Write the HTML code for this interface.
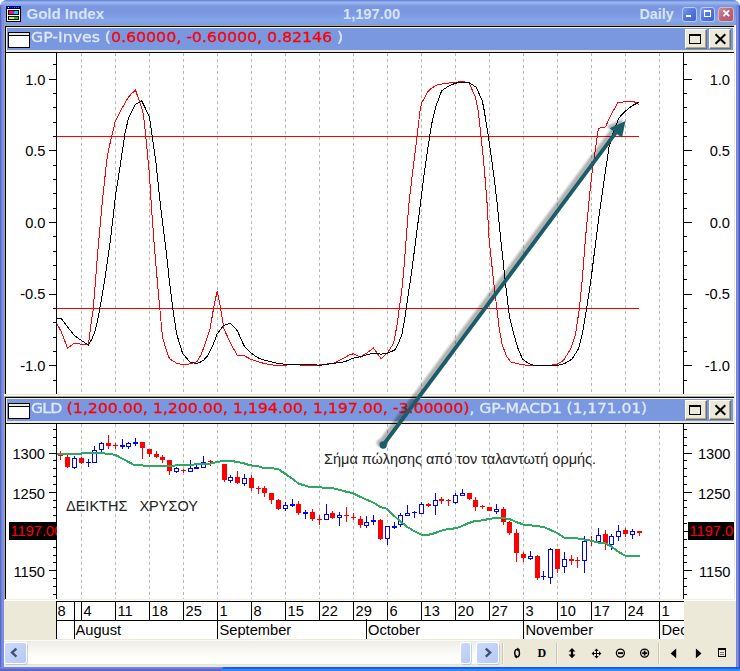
<!DOCTYPE html>
<html><head><meta charset="utf-8"><title>Gold Index</title>
<style>
html,body{margin:0;padding:0;background:#fff;}
body{width:740px;height:671px;overflow:hidden;position:relative;font-family:"Liberation Sans",sans-serif;}
#win{position:absolute;left:0;top:0;width:740px;height:671px;background:#7a96df;border-radius:7px 7px 0 0;overflow:hidden;}
#tb{position:absolute;left:0;top:0;width:740px;height:25px;background:linear-gradient(to bottom,#5f80da 0px,#6f90e0 0.9px,#96b1eb 1.8px,#9cb6ed 3px,#88a5e6 4.5px,#7a96df 6.5px,#7a97e0 12px,#83a5ea 20px,#81a2e7 23px,#7b9adf 25px);}
#lb{position:absolute;left:0;top:5px;width:4px;height:666px;background:linear-gradient(to right,#5a68ca 0px,#5a68ca 1px,#7282da 1px,#7282da 2px,#7a90de 2px,#7a90de 3px,#7892e0 3px);}
#rb{position:absolute;left:736px;top:5px;width:4px;height:662px;background:linear-gradient(to right,#6c84dc 0px,#6c84dc 1px,#7a90e0 1px,#7a90e0 2px,#6c76ce 2px,#6c76ce 3px,#4c52ba 3px);}
#bb{position:absolute;left:0;top:667px;width:740px;height:4px;background:linear-gradient(to bottom,#7b90e0 0px,#6e80d8 1.3px,#5c68c8 2.6px,#5560c2 4px);}
#bb2{position:absolute;left:221px;top:667px;width:519px;height:4px;border-top-left-radius:4px;background:linear-gradient(to bottom,#2a58d8 0px,#0a50de 0.9px,#1c6cee 1.6px,#2a88fc 2.3px,#2b8cff 4px);}
.abs{position:absolute;}
.ttl{position:absolute;top:5px;height:18px;line-height:18px;font-weight:bold;font-size:14.67px;color:#d8e4f8;white-space:nowrap;}
#client{position:absolute;left:4px;top:25px;width:732px;height:642px;background:#ece9d8;}
.cb{position:absolute;top:6.5px;width:15.2px;height:15.2px;border:1px solid #b9c9f2;border-radius:3px;box-sizing:border-box;}
.hdr{position:absolute;left:7px;width:726px;height:22px;background:#7a98e0;}
.hbtn{position:absolute;width:22px;height:20px;box-sizing:border-box;background:#ece9d8;border-top:1px solid #fff;border-left:1px solid #fff;border-right:1px solid #716f64;border-bottom:1px solid #716f64;}
.hbtn:after{content:"";position:absolute;left:0;top:0;right:0;bottom:0;border-right:1px solid #aca899;border-bottom:1px solid #aca899;}
.htxt{position:absolute;white-space:nowrap;font-family:"DejaVu Sans","Liberation Sans",sans-serif;transform-origin:0 0;line-height:18px;height:18px;color:#dfe8fb;-webkit-text-stroke:0.3px currentColor;}
.htxt b{font-weight:normal;color:#ff0000;}
.ico{position:absolute;left:8px;width:22px;height:16px;box-sizing:border-box;border:1px solid #000;background:#fff;}
.ico:before{content:"";position:absolute;left:0;top:0;width:20px;height:2px;background:#ece9d8;border-bottom:1px solid #000;}
svg text{font-family:"Liberation Sans",sans-serif;}
.sbtn{position:absolute;top:642px;width:23px;height:22px;background:#fff;border-radius:3px;box-shadow:1px 1px 0 rgba(140,165,220,.5);}
.sbtn i{position:absolute;left:1px;top:1px;right:1px;bottom:1px;border-radius:2px;background:linear-gradient(135deg,#ccd9fa,#b7caf4);}
</style></head><body>
<div id="win">
<div id="tb"></div><div id="lb"></div><div id="rb"></div><div id="bb"></div><div id="bb2"></div>

<svg class="abs" style="left:6px;top:6px" width="15" height="16" viewBox="0 0 15 16" shape-rendering="crispEdges">
<rect x="0" y="0" width="15" height="16" fill="#000"/>
<rect x="0" y="0" width="15" height="2" fill="#0000a8"/>
<rect x="2" y="1" width="1" height="1" fill="#fff"/><rect x="4" y="1" width="1" height="1" fill="#2020ff"/><rect x="6" y="1" width="1" height="1" fill="#2020ff"/><rect x="8" y="1" width="1" height="1" fill="#008a8a"/><rect x="10" y="1" width="1" height="1" fill="#008a8a"/><rect x="12" y="1" width="1" height="1" fill="#008a8a"/>
<rect x="1" y="3" width="13" height="12" fill="#fff"/>
<rect x="2" y="4" width="11" height="5" fill="#000"/><rect x="2" y="10" width="11" height="4" fill="#000"/>
<rect x="3" y="5" width="5" height="3" fill="#ff00a0"/><rect x="8" y="5" width="4" height="3" fill="#00d0ff"/>
<rect x="3" y="11" width="5" height="2" fill="#f0f000"/><rect x="8" y="11" width="4" height="2" fill="#00e000"/>
</svg>
<div class="ttl" style="left:26.5px;font-size:15px">Gold Index</div>
<div class="ttl" style="left:343px">1,197.00</div>
<div class="ttl" style="left:639.5px;font-size:14.3px">Daily</div>

<div class="cb" style="left:682.2px;background:linear-gradient(135deg,#7d9bea 0%,#5777de 45%,#3f61d6 100%);"><div class="abs" style="left:2.8px;top:7.7px;width:5.2px;height:2px;background:#fff"></div></div>
<div class="cb" style="left:700.3px;background:linear-gradient(135deg,#7d9bea 0%,#5777de 45%,#3f61d6 100%);"><div class="abs" style="left:2.6px;top:2.6px;width:7.6px;height:6.8px;box-sizing:border-box;border:1px solid #fff;border-top-width:2px"></div></div>
<div class="cb" style="left:718.4px;border-color:#dcb4c2;background:linear-gradient(135deg,#c98a9c 0%,#b7657c 50%,#ae5a72 100%);"><svg class="abs" style="left:2.2px;top:1.9px" width="9" height="9" viewBox="0 0 9 9"><path d="M1.4 1.4 L7.2 7.2 M7.2 1.4 L1.4 7.2" stroke="#fff" stroke-width="1.9" fill="none"/></svg></div>

<div id="client"></div>
<div class="abs" style="left:4px;top:25px;width:730px;height:1px;background:#aca899"></div>
<div class="abs" style="left:4px;top:25px;width:1px;height:370px;background:#aca899"></div>
<div class="abs" style="left:5px;top:26px;width:729px;height:1px;background:#000"></div>
<div class="abs" style="left:5px;top:26px;width:1px;height:368px;background:#000"></div>
<div class="abs" style="left:6px;top:27px;width:728px;height:1px;background:#f6f4ea"></div>
<div class="abs" style="left:6px;top:27px;width:1px;height:25px;background:#f6f4ea"></div>
<div class="abs" style="left:734px;top:25px;width:1px;height:371px;background:#ece9d8"></div>
<div class="abs" style="left:735px;top:25px;width:1px;height:371px;background:#fff"></div>
<div class="abs" style="left:6px;top:53px;width:728px;height:341px;background:#fff"></div>
<div class="abs" style="left:5px;top:52px;width:729px;height:1px;background:#000"></div>
<div class="abs" style="left:4px;top:394px;width:731px;height:1px;background:#ece9d8"></div>
<div class="abs" style="left:4px;top:395px;width:732px;height:1px;background:#fff"></div>
<div class="abs" style="left:4px;top:396px;width:730px;height:1px;background:#aca899"></div>
<div class="abs" style="left:4px;top:396px;width:1px;height:204px;background:#aca899"></div>
<div class="abs" style="left:5px;top:397px;width:729px;height:1px;background:#000"></div>
<div class="abs" style="left:5px;top:397px;width:1px;height:202px;background:#000"></div>
<div class="abs" style="left:6px;top:398px;width:728px;height:1px;background:#f6f4ea"></div>
<div class="abs" style="left:6px;top:398px;width:1px;height:25px;background:#f6f4ea"></div>
<div class="abs" style="left:734px;top:396px;width:1px;height:204px;background:#ece9d8"></div>
<div class="abs" style="left:735px;top:396px;width:1px;height:204px;background:#fff"></div>
<div class="abs" style="left:6px;top:424px;width:728px;height:175px;background:#fff"></div>
<div class="abs" style="left:5px;top:423px;width:729px;height:1px;background:#000"></div>
<div class="abs" style="left:5px;top:599px;width:730px;height:1px;background:#f1efe2"></div>
<div class="abs" style="left:4px;top:600px;width:732px;height:1px;background:#fff"></div>
<div class="hdr" style="top:28px"></div>
<div class="ico" style="top:32px"></div>
<div class="htxt" id="h28" style="left:31px;top:28.4px;font-size:14.6px;transform:scaleX(1.079)">GP-Inves (<b>0.60000, -0.60000, 0.82146 </b>)</div>
<div class="hbtn" style="left:685px;top:29px"><div class="abs" style="left:3px;top:4px;width:12px;height:10px;box-sizing:border-box;border:1px solid #000;border-top-width:2px"></div></div>
<div class="hbtn" style="left:709px;top:29px"><svg class="abs" style="left:3.5px;top:3px" width="13" height="12" viewBox="0 0 13 12"><path d="M1.5 1.2 L11.3 10.8 M11.3 1.2 L1.5 10.8" stroke="#000" stroke-width="2" fill="none"/></svg></div>
<div class="hdr" style="top:399px"></div>
<div class="ico" style="top:403px"></div>
<div class="htxt" id="h399" style="left:31px;top:399.4px;font-size:14.6px;transform:scaleX(1.072)"><span style="letter-spacing:-0.7px">GLD</span> <b style="letter-spacing:0.035px">(1,200.00, 1,200.00, 1,194.00, 1,197.00, -3.00000)</b><span style="letter-spacing:-0.13px">, GP-MACD1 (1,171.01)</span></div>
<div class="hbtn" style="left:685px;top:400px"><div class="abs" style="left:3px;top:4px;width:12px;height:10px;box-sizing:border-box;border:1px solid #000;border-top-width:2px"></div></div>
<div class="hbtn" style="left:709px;top:400px"><svg class="abs" style="left:3.5px;top:3px" width="13" height="12" viewBox="0 0 13 12"><path d="M1.5 1.2 L11.3 10.8 M11.3 1.2 L1.5 10.8" stroke="#000" stroke-width="2" fill="none"/></svg></div>
<svg class="abs" style="left:0;top:0" width="740" height="671" viewBox="0 0 740 671">
<defs><filter id="sh" x="-10%" y="-10%" width="120%" height="120%"><feGaussianBlur stdDeviation="1.1"/></filter>
<clipPath id="c1"><rect x="57" y="53" width="626" height="341"/></clipPath><clipPath id="c2"><rect x="57" y="424" width="626" height="175"/></clipPath></defs>
<g shape-rendering="crispEdges">
<line x1="81.5" y1="53" x2="81.5" y2="394" stroke="#b8b8b8" stroke-width="1" stroke-dasharray="3,3"/>
<line x1="81.5" y1="424" x2="81.5" y2="599" stroke="#b8b8b8" stroke-width="1" stroke-dasharray="3,3"/>
<line x1="115.5" y1="53" x2="115.5" y2="394" stroke="#b8b8b8" stroke-width="1" stroke-dasharray="3,3"/>
<line x1="115.5" y1="424" x2="115.5" y2="599" stroke="#b8b8b8" stroke-width="1" stroke-dasharray="3,3"/>
<line x1="149.5" y1="53" x2="149.5" y2="394" stroke="#b8b8b8" stroke-width="1" stroke-dasharray="3,3"/>
<line x1="149.5" y1="424" x2="149.5" y2="599" stroke="#b8b8b8" stroke-width="1" stroke-dasharray="3,3"/>
<line x1="183.5" y1="53" x2="183.5" y2="394" stroke="#b8b8b8" stroke-width="1" stroke-dasharray="3,3"/>
<line x1="183.5" y1="424" x2="183.5" y2="599" stroke="#b8b8b8" stroke-width="1" stroke-dasharray="3,3"/>
<line x1="217.5" y1="53" x2="217.5" y2="394" stroke="#b8b8b8" stroke-width="1" stroke-dasharray="3,3"/>
<line x1="217.5" y1="424" x2="217.5" y2="599" stroke="#b8b8b8" stroke-width="1" stroke-dasharray="3,3"/>
<line x1="251.5" y1="53" x2="251.5" y2="394" stroke="#b8b8b8" stroke-width="1" stroke-dasharray="3,3"/>
<line x1="251.5" y1="424" x2="251.5" y2="599" stroke="#b8b8b8" stroke-width="1" stroke-dasharray="3,3"/>
<line x1="285.5" y1="53" x2="285.5" y2="394" stroke="#b8b8b8" stroke-width="1" stroke-dasharray="3,3"/>
<line x1="285.5" y1="424" x2="285.5" y2="599" stroke="#b8b8b8" stroke-width="1" stroke-dasharray="3,3"/>
<line x1="319.5" y1="53" x2="319.5" y2="394" stroke="#b8b8b8" stroke-width="1" stroke-dasharray="3,3"/>
<line x1="319.5" y1="424" x2="319.5" y2="599" stroke="#b8b8b8" stroke-width="1" stroke-dasharray="3,3"/>
<line x1="353.5" y1="53" x2="353.5" y2="394" stroke="#b8b8b8" stroke-width="1" stroke-dasharray="3,3"/>
<line x1="353.5" y1="424" x2="353.5" y2="599" stroke="#b8b8b8" stroke-width="1" stroke-dasharray="3,3"/>
<line x1="387.5" y1="53" x2="387.5" y2="394" stroke="#b8b8b8" stroke-width="1" stroke-dasharray="3,3"/>
<line x1="387.5" y1="424" x2="387.5" y2="599" stroke="#b8b8b8" stroke-width="1" stroke-dasharray="3,3"/>
<line x1="421.5" y1="53" x2="421.5" y2="394" stroke="#b8b8b8" stroke-width="1" stroke-dasharray="3,3"/>
<line x1="421.5" y1="424" x2="421.5" y2="599" stroke="#b8b8b8" stroke-width="1" stroke-dasharray="3,3"/>
<line x1="455.5" y1="53" x2="455.5" y2="394" stroke="#b8b8b8" stroke-width="1" stroke-dasharray="3,3"/>
<line x1="455.5" y1="424" x2="455.5" y2="599" stroke="#b8b8b8" stroke-width="1" stroke-dasharray="3,3"/>
<line x1="489.5" y1="53" x2="489.5" y2="394" stroke="#b8b8b8" stroke-width="1" stroke-dasharray="3,3"/>
<line x1="489.5" y1="424" x2="489.5" y2="599" stroke="#b8b8b8" stroke-width="1" stroke-dasharray="3,3"/>
<line x1="523.5" y1="53" x2="523.5" y2="394" stroke="#b8b8b8" stroke-width="1" stroke-dasharray="3,3"/>
<line x1="523.5" y1="424" x2="523.5" y2="599" stroke="#b8b8b8" stroke-width="1" stroke-dasharray="3,3"/>
<line x1="557.5" y1="53" x2="557.5" y2="394" stroke="#b8b8b8" stroke-width="1" stroke-dasharray="3,3"/>
<line x1="557.5" y1="424" x2="557.5" y2="599" stroke="#b8b8b8" stroke-width="1" stroke-dasharray="3,3"/>
<line x1="591.5" y1="53" x2="591.5" y2="394" stroke="#b8b8b8" stroke-width="1" stroke-dasharray="3,3"/>
<line x1="591.5" y1="424" x2="591.5" y2="599" stroke="#b8b8b8" stroke-width="1" stroke-dasharray="3,3"/>
<line x1="625.5" y1="53" x2="625.5" y2="394" stroke="#b8b8b8" stroke-width="1" stroke-dasharray="3,3"/>
<line x1="625.5" y1="424" x2="625.5" y2="599" stroke="#b8b8b8" stroke-width="1" stroke-dasharray="3,3"/>
<line x1="659.5" y1="53" x2="659.5" y2="394" stroke="#b8b8b8" stroke-width="1" stroke-dasharray="3,3"/>
<line x1="659.5" y1="424" x2="659.5" y2="599" stroke="#b8b8b8" stroke-width="1" stroke-dasharray="3,3"/>
<rect x="56" y="53" width="1" height="341" fill="#000"/>
<rect x="683" y="53" width="1" height="341" fill="#000"/>
<rect x="56" y="424" width="1" height="175" fill="#000"/>
<rect x="683" y="424" width="1" height="175" fill="#000"/>
<rect x="53" y="380" width="3" height="1" fill="#000"/>
<rect x="684" y="380" width="3" height="1" fill="#000"/>
<rect x="49" y="365" width="7" height="1" fill="#000"/>
<rect x="684" y="365" width="8" height="1" fill="#000"/>
<rect x="53" y="351" width="3" height="1" fill="#000"/>
<rect x="684" y="351" width="3" height="1" fill="#000"/>
<rect x="53" y="337" width="3" height="1" fill="#000"/>
<rect x="684" y="337" width="3" height="1" fill="#000"/>
<rect x="53" y="322" width="3" height="1" fill="#000"/>
<rect x="684" y="322" width="3" height="1" fill="#000"/>
<rect x="53" y="308" width="3" height="1" fill="#000"/>
<rect x="684" y="308" width="3" height="1" fill="#000"/>
<rect x="49" y="294" width="7" height="1" fill="#000"/>
<rect x="684" y="294" width="8" height="1" fill="#000"/>
<rect x="53" y="279" width="3" height="1" fill="#000"/>
<rect x="684" y="279" width="3" height="1" fill="#000"/>
<rect x="53" y="265" width="3" height="1" fill="#000"/>
<rect x="684" y="265" width="3" height="1" fill="#000"/>
<rect x="53" y="251" width="3" height="1" fill="#000"/>
<rect x="684" y="251" width="3" height="1" fill="#000"/>
<rect x="53" y="236" width="3" height="1" fill="#000"/>
<rect x="684" y="236" width="3" height="1" fill="#000"/>
<rect x="49" y="222" width="7" height="1" fill="#000"/>
<rect x="684" y="222" width="8" height="1" fill="#000"/>
<rect x="53" y="208" width="3" height="1" fill="#000"/>
<rect x="684" y="208" width="3" height="1" fill="#000"/>
<rect x="53" y="193" width="3" height="1" fill="#000"/>
<rect x="684" y="193" width="3" height="1" fill="#000"/>
<rect x="53" y="179" width="3" height="1" fill="#000"/>
<rect x="684" y="179" width="3" height="1" fill="#000"/>
<rect x="53" y="165" width="3" height="1" fill="#000"/>
<rect x="684" y="165" width="3" height="1" fill="#000"/>
<rect x="49" y="150" width="7" height="1" fill="#000"/>
<rect x="684" y="150" width="8" height="1" fill="#000"/>
<rect x="53" y="136" width="3" height="1" fill="#000"/>
<rect x="684" y="136" width="3" height="1" fill="#000"/>
<rect x="53" y="122" width="3" height="1" fill="#000"/>
<rect x="684" y="122" width="3" height="1" fill="#000"/>
<rect x="53" y="107" width="3" height="1" fill="#000"/>
<rect x="684" y="107" width="3" height="1" fill="#000"/>
<rect x="53" y="93" width="3" height="1" fill="#000"/>
<rect x="684" y="93" width="3" height="1" fill="#000"/>
<rect x="49" y="79" width="7" height="1" fill="#000"/>
<rect x="684" y="79" width="8" height="1" fill="#000"/>
<rect x="53" y="64" width="3" height="1" fill="#000"/>
<rect x="684" y="64" width="3" height="1" fill="#000"/>
<rect x="53" y="594" width="3" height="1" fill="#000"/>
<rect x="684" y="594" width="3" height="1" fill="#000"/>
<rect x="53" y="586" width="3" height="1" fill="#000"/>
<rect x="684" y="586" width="3" height="1" fill="#000"/>
<rect x="53" y="578" width="3" height="1" fill="#000"/>
<rect x="684" y="578" width="3" height="1" fill="#000"/>
<rect x="49" y="570" width="7" height="1" fill="#000"/>
<rect x="684" y="570" width="8" height="1" fill="#000"/>
<rect x="53" y="562" width="3" height="1" fill="#000"/>
<rect x="684" y="562" width="3" height="1" fill="#000"/>
<rect x="53" y="555" width="3" height="1" fill="#000"/>
<rect x="684" y="555" width="3" height="1" fill="#000"/>
<rect x="53" y="547" width="3" height="1" fill="#000"/>
<rect x="684" y="547" width="3" height="1" fill="#000"/>
<rect x="53" y="539" width="3" height="1" fill="#000"/>
<rect x="684" y="539" width="3" height="1" fill="#000"/>
<rect x="49" y="531" width="7" height="1" fill="#000"/>
<rect x="684" y="531" width="8" height="1" fill="#000"/>
<rect x="53" y="523" width="3" height="1" fill="#000"/>
<rect x="684" y="523" width="3" height="1" fill="#000"/>
<rect x="53" y="515" width="3" height="1" fill="#000"/>
<rect x="684" y="515" width="3" height="1" fill="#000"/>
<rect x="53" y="507" width="3" height="1" fill="#000"/>
<rect x="684" y="507" width="3" height="1" fill="#000"/>
<rect x="53" y="500" width="3" height="1" fill="#000"/>
<rect x="684" y="500" width="3" height="1" fill="#000"/>
<rect x="49" y="492" width="7" height="1" fill="#000"/>
<rect x="684" y="492" width="8" height="1" fill="#000"/>
<rect x="53" y="484" width="3" height="1" fill="#000"/>
<rect x="684" y="484" width="3" height="1" fill="#000"/>
<rect x="53" y="476" width="3" height="1" fill="#000"/>
<rect x="684" y="476" width="3" height="1" fill="#000"/>
<rect x="53" y="468" width="3" height="1" fill="#000"/>
<rect x="684" y="468" width="3" height="1" fill="#000"/>
<rect x="53" y="460" width="3" height="1" fill="#000"/>
<rect x="684" y="460" width="3" height="1" fill="#000"/>
<rect x="49" y="453" width="7" height="1" fill="#000"/>
<rect x="684" y="453" width="8" height="1" fill="#000"/>
<rect x="53" y="445" width="3" height="1" fill="#000"/>
<rect x="684" y="445" width="3" height="1" fill="#000"/>
<rect x="53" y="437" width="3" height="1" fill="#000"/>
<rect x="684" y="437" width="3" height="1" fill="#000"/>
<rect x="53" y="429" width="3" height="1" fill="#000"/>
<rect x="684" y="429" width="3" height="1" fill="#000"/>
<rect x="57" y="136" width="582" height="1" fill="#f00"/><rect x="57" y="308" width="582" height="1" fill="#f00"/>
<g clip-path="url(#c1)"><polyline points="57.0,323.9 61.1,331.4 67.6,348.2 74.3,343.2 81.4,344.2 88.4,344.6 91.5,320.3 93.1,310.4 95.1,286.1 97.6,253.7 101.6,209.7 103.6,189.5 106.7,161.1 108.7,148.9 112.4,133.7 115.2,121.6 121.9,108.4 128.4,97.2 131.6,93.6 135.5,90.1 142.6,110.4 143.8,117.5 146.2,140.8 149.3,173.2 151.3,205.0 154.3,245.5 157.4,282.0 160.0,310.4 162.4,336.5 166.1,349.7 169.5,358.8 176.6,363.2 183.3,364.9 189.8,363.9 196.9,361.8 201.0,354.7 204.0,347.0 210.1,328.8 214.2,304.5 217.2,291.3 220.3,306.5 223.9,328.8 230.4,343.0 237.1,355.1 244.2,355.7 250.7,359.2 257.8,361.6 264.9,363.7 275.0,365.3 285.1,365.3 289.2,364.7 309.5,365.3 316.6,365.3 329.7,363.7 333.8,363.2 341.9,359.2 345.0,357.6 349.0,355.1 353.5,353.7 360.2,357.2 367.3,352.7 373.4,348.0 381.1,358.6 387.6,352.7 393.7,343.0 396.7,326.8 399.3,308.5 401.8,290.3 403.8,270.0 408.8,204.8 412.2,175.4 415.3,151.1 417.7,130.8 420.3,108.5 422.0,102.4 427.4,92.3 431.5,88.2 437.6,84.6 447.7,83.2 461.9,81.6 469.0,82.6 475.5,97.4 478.1,110.5 480.5,130.8 483.2,157.2 485.2,179.5 487.2,204.8 489.0,237.9 493.3,278.8 496.8,308.0 499.2,328.4 502.1,344.4 506.5,356.1 510.9,362.0 522.5,364.9 534.2,365.5 556.1,364.9 563.4,360.5 570.7,348.8 575.6,334.2 579.4,308.0 582.3,278.8 585.3,239.9 589.5,196.0 591.8,174.3 594.0,159.7 596.4,142.2 598.4,128.4 605.4,127.0 610.5,115.8 618.0,102.3 629.5,101.6 633.5,101.4 638.9,104.3" fill="none" stroke="#f00" stroke-width="1"/>
<polyline points="57.0,318.3 61.1,318.3 67.2,326.4 74.3,335.5 81.4,340.5 88.4,345.0 91.5,339.8 94.5,333.0 97.6,320.5 100.6,304.3 104.7,280.0 109.7,245.5 113.4,214.8 115.8,193.5 120.3,165.1 124.9,133.7 128.4,118.5 135.5,104.3 141.8,100.9 149.3,116.5 152.3,136.8 155.8,161.1 160.4,205.0 165.5,245.5 169.5,282.0 173.3,312.0 176.6,334.0 182.7,353.7 190.4,362.4 196.9,363.4 201.0,361.8 203.6,360.2 208.1,355.1 212.2,347.0 217.2,333.9 223.3,325.7 230.4,323.3 237.1,330.4 244.2,346.0 250.7,352.7 257.8,357.8 264.9,360.2 275.0,362.8 285.1,364.3 301.4,364.7 313.5,364.7 319.6,365.3 329.7,363.9 341.9,362.2 345.0,361.6 353.1,358.2 360.2,356.8 367.3,354.7 373.4,353.1 381.1,354.1 387.6,353.1 394.7,350.1 398.1,344.0 401.8,334.9 404.8,318.7 406.8,304.5 409.5,286.2 411.9,270.0 420.3,204.8 423.4,179.5 427.4,151.1 431.5,124.7 435.5,107.5 441.6,90.9 447.7,86.6 455.2,83.2 461.9,82.2 469.0,82.6 476.1,87.2 482.2,100.4 484.2,110.5 488.2,134.9 491.3,157.2 494.3,179.5 496.8,200.0 500.6,237.9 505.0,278.8 509.4,316.7 513.8,334.2 518.1,348.8 522.5,359.0 528.4,363.4 534.2,365.5 557.5,365.5 564.8,363.4 572.1,359.0 578.5,348.8 582.3,334.2 586.7,308.0 591.1,278.8 595.5,243.8 599.2,214.9 602.6,190.5 606.0,167.6 609.2,146.2 613.2,132.7 617.3,121.9 618.4,118.5 624.0,112.4 629.5,107.7 633.5,105.0 638.9,102.3" fill="none" stroke="#000" stroke-width="1"/></g>
<rect x="60" y="451" width="1" height="9" fill="#ff0000"/>
<rect x="58" y="455" width="5" height="1" fill="#ff0000"/>
<rect x="67" y="455" width="1" height="13" fill="#ff0000"/>
<rect x="65" y="457" width="5" height="10" fill="#ff0000"/>
<rect x="74" y="456" width="1" height="13" fill="#0000ff"/>
<rect x="72" y="458" width="5" height="10" fill="#0000ff"/>
<rect x="73" y="459" width="3" height="8" fill="#fff"/>
<rect x="81" y="457" width="1" height="7" fill="#ff0000"/>
<rect x="79" y="458" width="5" height="5" fill="#ff0000"/>
<rect x="88" y="459" width="1" height="8" fill="#0000ff"/>
<rect x="86" y="462" width="5" height="1" fill="#0000ff"/>
<rect x="94" y="446" width="1" height="17" fill="#0000ff"/>
<rect x="92" y="450" width="5" height="13" fill="#0000ff"/>
<rect x="93" y="451" width="3" height="11" fill="#fff"/>
<rect x="101" y="442" width="1" height="10" fill="#0000ff"/>
<rect x="99" y="443" width="5" height="7" fill="#0000ff"/>
<rect x="100" y="444" width="3" height="5" fill="#fff"/>
<rect x="108" y="435" width="1" height="14" fill="#ff0000"/>
<rect x="106" y="443" width="5" height="3" fill="#ff0000"/>
<rect x="115" y="443" width="1" height="6" fill="#ff0000"/>
<rect x="113" y="445" width="5" height="1" fill="#ff0000"/>
<rect x="122" y="439" width="1" height="10" fill="#0000ff"/>
<rect x="120" y="445" width="5" height="2" fill="#0000ff"/>
<rect x="128" y="442" width="1" height="7" fill="#0000ff"/>
<rect x="126" y="443" width="5" height="4" fill="#0000ff"/>
<rect x="127" y="444" width="3" height="2" fill="#fff"/>
<rect x="135" y="438" width="1" height="8" fill="#0000ff"/>
<rect x="133" y="442" width="5" height="2" fill="#0000ff"/>
<rect x="142" y="442" width="1" height="17" fill="#ff0000"/>
<rect x="140" y="442" width="5" height="6" fill="#ff0000"/>
<rect x="149" y="449" width="1" height="8" fill="#ff0000"/>
<rect x="147" y="449" width="5" height="5" fill="#ff0000"/>
<rect x="156" y="451" width="1" height="7" fill="#ff0000"/>
<rect x="154" y="454" width="5" height="3" fill="#ff0000"/>
<rect x="162" y="455" width="1" height="8" fill="#ff0000"/>
<rect x="160" y="457" width="5" height="3" fill="#ff0000"/>
<rect x="169" y="460" width="1" height="15" fill="#ff0000"/>
<rect x="167" y="460" width="5" height="11" fill="#ff0000"/>
<rect x="176" y="467" width="1" height="6" fill="#0000ff"/>
<rect x="174" y="468" width="5" height="4" fill="#0000ff"/>
<rect x="175" y="469" width="3" height="2" fill="#fff"/>
<rect x="183" y="469" width="1" height="4" fill="#ff0000"/>
<rect x="181" y="470" width="5" height="1" fill="#ff0000"/>
<rect x="190" y="460" width="1" height="12" fill="#0000ff"/>
<rect x="188" y="468" width="5" height="4" fill="#0000ff"/>
<rect x="189" y="469" width="3" height="2" fill="#fff"/>
<rect x="196" y="465" width="1" height="4" fill="#0000ff"/>
<rect x="194" y="467" width="5" height="2" fill="#0000ff"/>
<rect x="203" y="456" width="1" height="12" fill="#0000ff"/>
<rect x="201" y="462" width="5" height="6" fill="#0000ff"/>
<rect x="202" y="463" width="3" height="4" fill="#fff"/>
<rect x="210" y="460" width="1" height="6" fill="#ff0000"/>
<rect x="208" y="461" width="5" height="1" fill="#ff0000"/>
<rect x="224" y="464" width="1" height="18" fill="#ff0000"/>
<rect x="222" y="464" width="5" height="16" fill="#ff0000"/>
<rect x="230" y="475" width="1" height="8" fill="#0000ff"/>
<rect x="228" y="477" width="5" height="4" fill="#0000ff"/>
<rect x="229" y="478" width="3" height="2" fill="#fff"/>
<rect x="237" y="471" width="1" height="13" fill="#ff0000"/>
<rect x="235" y="477" width="5" height="6" fill="#ff0000"/>
<rect x="244" y="474" width="1" height="12" fill="#0000ff"/>
<rect x="242" y="478" width="5" height="6" fill="#0000ff"/>
<rect x="243" y="479" width="3" height="4" fill="#fff"/>
<rect x="251" y="475" width="1" height="16" fill="#ff0000"/>
<rect x="249" y="478" width="5" height="10" fill="#ff0000"/>
<rect x="258" y="486" width="1" height="8" fill="#ff0000"/>
<rect x="256" y="488" width="5" height="1" fill="#ff0000"/>
<rect x="264" y="486" width="1" height="11" fill="#ff0000"/>
<rect x="262" y="488" width="5" height="5" fill="#ff0000"/>
<rect x="271" y="493" width="1" height="11" fill="#ff0000"/>
<rect x="269" y="493" width="5" height="7" fill="#ff0000"/>
<rect x="278" y="499" width="1" height="11" fill="#ff0000"/>
<rect x="276" y="500" width="5" height="9" fill="#ff0000"/>
<rect x="285" y="502" width="1" height="9" fill="#0000ff"/>
<rect x="283" y="505" width="5" height="4" fill="#0000ff"/>
<rect x="284" y="506" width="3" height="2" fill="#fff"/>
<rect x="292" y="499" width="1" height="8" fill="#0000ff"/>
<rect x="290" y="504" width="5" height="2" fill="#0000ff"/>
<rect x="298" y="501" width="1" height="14" fill="#ff0000"/>
<rect x="296" y="504" width="5" height="9" fill="#ff0000"/>
<rect x="305" y="510" width="1" height="9" fill="#0000ff"/>
<rect x="303" y="512" width="5" height="2" fill="#0000ff"/>
<rect x="312" y="509" width="1" height="12" fill="#ff0000"/>
<rect x="310" y="512" width="5" height="7" fill="#ff0000"/>
<rect x="319" y="515" width="1" height="10" fill="#ff0000"/>
<rect x="317" y="519" width="5" height="1" fill="#ff0000"/>
<rect x="326" y="504" width="1" height="16" fill="#0000ff"/>
<rect x="324" y="514" width="5" height="6" fill="#0000ff"/>
<rect x="325" y="515" width="3" height="4" fill="#fff"/>
<rect x="332" y="511" width="1" height="8" fill="#ff0000"/>
<rect x="330" y="513" width="5" height="5" fill="#ff0000"/>
<rect x="339" y="512" width="1" height="14" fill="#0000ff"/>
<rect x="337" y="515" width="5" height="3" fill="#0000ff"/>
<rect x="338" y="516" width="3" height="1" fill="#fff"/>
<rect x="346" y="507" width="1" height="15" fill="#ff0000"/>
<rect x="344" y="515" width="5" height="1" fill="#ff0000"/>
<rect x="353" y="513" width="1" height="7" fill="#ff0000"/>
<rect x="351" y="517" width="5" height="1" fill="#ff0000"/>
<rect x="360" y="516" width="1" height="12" fill="#ff0000"/>
<rect x="358" y="519" width="5" height="6" fill="#ff0000"/>
<rect x="366" y="516" width="1" height="12" fill="#0000ff"/>
<rect x="364" y="522" width="5" height="4" fill="#0000ff"/>
<rect x="365" y="523" width="3" height="2" fill="#fff"/>
<rect x="373" y="515" width="1" height="10" fill="#0000ff"/>
<rect x="371" y="520" width="5" height="2" fill="#0000ff"/>
<rect x="380" y="519" width="1" height="21" fill="#ff0000"/>
<rect x="378" y="520" width="5" height="19" fill="#ff0000"/>
<rect x="387" y="526" width="1" height="19" fill="#0000ff"/>
<rect x="385" y="526" width="5" height="13" fill="#0000ff"/>
<rect x="386" y="527" width="3" height="11" fill="#fff"/>
<rect x="394" y="522" width="1" height="7" fill="#0000ff"/>
<rect x="392" y="526" width="5" height="2" fill="#0000ff"/>
<rect x="400" y="513" width="1" height="14" fill="#0000ff"/>
<rect x="398" y="515" width="5" height="10" fill="#0000ff"/>
<rect x="399" y="516" width="3" height="8" fill="#fff"/>
<rect x="407" y="505" width="1" height="11" fill="#0000ff"/>
<rect x="405" y="513" width="5" height="3" fill="#0000ff"/>
<rect x="406" y="514" width="3" height="1" fill="#fff"/>
<rect x="414" y="511" width="1" height="7" fill="#0000ff"/>
<rect x="412" y="512" width="5" height="1" fill="#0000ff"/>
<rect x="421" y="502" width="1" height="12" fill="#0000ff"/>
<rect x="419" y="504" width="5" height="10" fill="#0000ff"/>
<rect x="420" y="505" width="3" height="8" fill="#fff"/>
<rect x="428" y="503" width="1" height="4" fill="#ff0000"/>
<rect x="426" y="504" width="5" height="2" fill="#ff0000"/>
<rect x="435" y="493" width="1" height="22" fill="#0000ff"/>
<rect x="433" y="500" width="5" height="6" fill="#0000ff"/>
<rect x="434" y="501" width="3" height="4" fill="#fff"/>
<rect x="441" y="497" width="1" height="7" fill="#ff0000"/>
<rect x="439" y="499" width="5" height="2" fill="#ff0000"/>
<rect x="448" y="499" width="1" height="7" fill="#ff0000"/>
<rect x="446" y="500" width="5" height="1" fill="#ff0000"/>
<rect x="455" y="493" width="1" height="11" fill="#0000ff"/>
<rect x="453" y="495" width="5" height="8" fill="#0000ff"/>
<rect x="454" y="496" width="3" height="6" fill="#fff"/>
<rect x="462" y="489" width="1" height="7" fill="#0000ff"/>
<rect x="460" y="493" width="5" height="3" fill="#0000ff"/>
<rect x="461" y="494" width="3" height="1" fill="#fff"/>
<rect x="469" y="493" width="1" height="7" fill="#ff0000"/>
<rect x="467" y="493" width="5" height="6" fill="#ff0000"/>
<rect x="475" y="497" width="1" height="14" fill="#ff0000"/>
<rect x="473" y="500" width="5" height="7" fill="#ff0000"/>
<rect x="482" y="505" width="1" height="4" fill="#ff0000"/>
<rect x="480" y="506" width="5" height="1" fill="#ff0000"/>
<rect x="489" y="507" width="1" height="4" fill="#ff0000"/>
<rect x="487" y="507" width="5" height="4" fill="#ff0000"/>
<rect x="496" y="504" width="1" height="10" fill="#0000ff"/>
<rect x="494" y="509" width="5" height="3" fill="#0000ff"/>
<rect x="495" y="510" width="3" height="1" fill="#fff"/>
<rect x="503" y="507" width="1" height="18" fill="#ff0000"/>
<rect x="501" y="509" width="5" height="13" fill="#ff0000"/>
<rect x="509" y="521" width="1" height="14" fill="#ff0000"/>
<rect x="507" y="522" width="5" height="11" fill="#ff0000"/>
<rect x="516" y="529" width="1" height="33" fill="#ff0000"/>
<rect x="514" y="533" width="5" height="20" fill="#ff0000"/>
<rect x="523" y="552" width="1" height="10" fill="#ff0000"/>
<rect x="521" y="554" width="5" height="4" fill="#ff0000"/>
<rect x="530" y="551" width="1" height="9" fill="#0000ff"/>
<rect x="528" y="556" width="5" height="3" fill="#0000ff"/>
<rect x="529" y="557" width="3" height="1" fill="#fff"/>
<rect x="537" y="555" width="1" height="25" fill="#ff0000"/>
<rect x="535" y="556" width="5" height="22" fill="#ff0000"/>
<rect x="543" y="571" width="1" height="9" fill="#0000ff"/>
<rect x="541" y="576" width="5" height="1" fill="#0000ff"/>
<rect x="550" y="548" width="1" height="36" fill="#0000ff"/>
<rect x="548" y="549" width="5" height="29" fill="#0000ff"/>
<rect x="549" y="550" width="3" height="27" fill="#fff"/>
<rect x="557" y="549" width="1" height="24" fill="#ff0000"/>
<rect x="555" y="549" width="5" height="20" fill="#ff0000"/>
<rect x="564" y="552" width="1" height="21" fill="#0000ff"/>
<rect x="562" y="559" width="5" height="8" fill="#0000ff"/>
<rect x="563" y="560" width="3" height="6" fill="#fff"/>
<rect x="571" y="555" width="1" height="10" fill="#ff0000"/>
<rect x="569" y="559" width="5" height="2" fill="#ff0000"/>
<rect x="577" y="557" width="1" height="11" fill="#ff0000"/>
<rect x="575" y="560" width="5" height="1" fill="#ff0000"/>
<rect x="584" y="536" width="1" height="37" fill="#0000ff"/>
<rect x="582" y="541" width="5" height="20" fill="#0000ff"/>
<rect x="583" y="542" width="3" height="18" fill="#fff"/>
<rect x="591" y="536" width="1" height="10" fill="#ff0000"/>
<rect x="598" y="528" width="1" height="14" fill="#0000ff"/>
<rect x="596" y="535" width="5" height="7" fill="#0000ff"/>
<rect x="597" y="536" width="3" height="5" fill="#fff"/>
<rect x="605" y="530" width="1" height="20" fill="#ff0000"/>
<rect x="603" y="534" width="5" height="9" fill="#ff0000"/>
<rect x="611" y="534" width="1" height="16" fill="#0000ff"/>
<rect x="609" y="536" width="5" height="9" fill="#0000ff"/>
<rect x="610" y="537" width="3" height="7" fill="#fff"/>
<rect x="618" y="525" width="1" height="16" fill="#0000ff"/>
<rect x="616" y="531" width="5" height="6" fill="#0000ff"/>
<rect x="617" y="532" width="3" height="4" fill="#fff"/>
<rect x="625" y="528" width="1" height="9" fill="#ff0000"/>
<rect x="623" y="530" width="5" height="4" fill="#ff0000"/>
<rect x="632" y="529" width="1" height="10" fill="#0000ff"/>
<rect x="630" y="531" width="5" height="4" fill="#0000ff"/>
<rect x="631" y="532" width="3" height="2" fill="#fff"/>
<rect x="639" y="531" width="1" height="5" fill="#ff0000"/>
<rect x="637" y="531" width="5" height="2" fill="#ff0000"/>
</g>
<polyline points="57.0,454.0 81.3,454.0 82.0,453.1 101.0,453.1 109.0,454.0 115.0,454.7 134.0,464.9 143.0,465.5 175.0,465.5 176.0,464.6 190.5,464.6 204.0,464.2 210.8,463.5 217.6,461.8 225.7,460.8 229.7,460.8 236.5,461.8 244.6,463.5 245.0,463.9 251.8,465.5 258.5,466.4 262.6,467.7 272.0,468.2 278.1,469.0 285.5,474.0 292.3,478.8 299.0,483.9 303.1,484.9 308.5,486.6 319.3,487.3 332.8,488.2 339.6,490.0 346.8,491.8 353.5,493.4 360.3,496.8 367.0,499.9 373.8,502.8 380.5,507.2 386.6,508.6 394.0,515.7 400.8,521.8 407.6,527.2 414.3,531.2 421.0,534.6 429.2,534.6 434.6,533.2 441.8,530.5 448.5,528.8 455.3,528.4 462.0,526.1 468.8,523.0 475.5,520.9 482.3,520.4 489.0,519.0 495.8,518.0 502.6,518.0 509.3,518.9 516.0,522.0 523.5,524.6 530.7,525.3 537.4,526.2 543.5,526.9 550.5,530.0 557.4,533.0 564.5,537.7 572.6,537.8 578.0,538.5 584.7,539.7 591.5,540.8 598.5,542.6 605.3,543.2 611.6,546.6 618.5,552.0 625.5,555.7 639.7,555.7" fill="none" stroke="#2fa862" stroke-width="2" stroke-linejoin="round" shape-rendering="crispEdges"/>
<g filter="url(#sh)" opacity="0.31" transform="translate(-2.8,-2.0)"><line x1="383.2" y1="445.0" x2="615.8" y2="132.6" stroke="#000" stroke-width="5.2"/><circle cx="383.2" cy="445.0" r="3.7" fill="#000"/><polygon points="625.5,121.0 609.6,128.2 622.0,137.8" fill="#000"/><polygon points="625.5,121.0 609.6,128.2 622.0,137.8" fill="#000" opacity="0.6"/></g>
<line x1="383.2" y1="445.0" x2="615.8" y2="132.6" stroke="#1a5d68" stroke-width="3.9"/><circle cx="383.2" cy="445.0" r="3.7" fill="#1a5d68"/><polygon points="625.5,121.0 609.6,128.2 622.0,137.8" fill="#1a5d68"/>
<text x="45.5" y="84.6" font-size="14.67" text-anchor="end" fill="#000">1.0</text>
<text x="730" y="84.6" font-size="14.67" text-anchor="end" fill="#000">1.0</text>
<text x="45.5" y="156.2" font-size="14.67" text-anchor="end" fill="#000">0.5</text>
<text x="730" y="156.2" font-size="14.67" text-anchor="end" fill="#000">0.5</text>
<text x="45.5" y="227.8" font-size="14.67" text-anchor="end" fill="#000">0.0</text>
<text x="730" y="227.8" font-size="14.67" text-anchor="end" fill="#000">0.0</text>
<text x="45.5" y="299.4" font-size="14.67" text-anchor="end" fill="#000">-0.5</text>
<text x="730" y="299.4" font-size="14.67" text-anchor="end" fill="#000">-0.5</text>
<text x="45.5" y="371.0" font-size="14.67" text-anchor="end" fill="#000">-1.0</text>
<text x="730" y="371.0" font-size="14.67" text-anchor="end" fill="#000">-1.0</text>
<text x="45" y="459.3" font-size="14.67" text-anchor="end" fill="#000">1300</text>
<text x="730.5" y="459.3" font-size="14.67" text-anchor="end" fill="#000">1300</text>
<text x="45" y="498.5" font-size="14.67" text-anchor="end" fill="#000">1250</text>
<text x="730.5" y="498.5" font-size="14.67" text-anchor="end" fill="#000">1250</text>
<text x="45" y="576.9" font-size="14.67" text-anchor="end" fill="#000">1150</text>
<text x="730.5" y="576.9" font-size="14.67" text-anchor="end" fill="#000">1150</text>
<clipPath id="pb1"><rect x="9" y="522" width="48" height="18"/></clipPath><clipPath id="pb2"><rect x="688" y="522" width="46" height="18"/></clipPath>
<rect x="9" y="522" width="48" height="18" fill="#000"/><rect x="688" y="522" width="46" height="18" fill="#000"/>
<text x="10.5" y="536.3" font-size="14.67" fill="#f00" clip-path="url(#pb1)">1197.00</text>
<text x="689.5" y="536.3" font-size="14.67" fill="#f00" clip-path="url(#pb2)">1197.00</text>
<text x="66" y="510.8" font-size="14.5" fill="#222" xml:space="preserve">ΔΕΙΚΤΗΣ   ΧΡΥΣΟΥ</text>
<text x="324" y="464" font-size="14.5" fill="#222">Σήμα πώλησης από τον ταλαντωτή ορμής.</text>
<g shape-rendering="crispEdges"><rect x="56" y="601" width="628" height="38" fill="#fff"/><rect x="56" y="601" width="628" height="1" fill="#000"/><rect x="56" y="620" width="628" height="1" fill="#000"/><rect x="56" y="601" width="1" height="38" fill="#000"/>
<rect x="74" y="601" width="1" height="38" fill="#000"/>
<rect x="81" y="601" width="1" height="19" fill="#000"/>
<rect x="115" y="601" width="1" height="19" fill="#000"/>
<rect x="149" y="601" width="1" height="19" fill="#000"/>
<rect x="183" y="601" width="1" height="19" fill="#000"/>
<rect x="217" y="601" width="1" height="38" fill="#000"/>
<rect x="251" y="601" width="1" height="19" fill="#000"/>
<rect x="285" y="601" width="1" height="19" fill="#000"/>
<rect x="319" y="601" width="1" height="19" fill="#000"/>
<rect x="353" y="601" width="1" height="19" fill="#000"/>
<rect x="387" y="601" width="1" height="19" fill="#000"/>
<rect x="421" y="601" width="1" height="19" fill="#000"/>
<rect x="455" y="601" width="1" height="19" fill="#000"/>
<rect x="489" y="601" width="1" height="19" fill="#000"/>
<rect x="523" y="601" width="1" height="38" fill="#000"/>
<rect x="557" y="601" width="1" height="19" fill="#000"/>
<rect x="591" y="601" width="1" height="19" fill="#000"/>
<rect x="625" y="601" width="1" height="19" fill="#000"/>
<rect x="659" y="601" width="1" height="38" fill="#000"/>
<rect x="366" y="619" width="1" height="20" fill="#000"/>
</g><clipPath id="dc"><rect x="56" y="601" width="628" height="38"/></clipPath><g clip-path="url(#dc)">
<text x="57.5" y="616" font-size="14.67">8</text>
<text x="83.5" y="616" font-size="14.67">4</text>
<text x="117.5" y="616" font-size="14.67">11</text>
<text x="151.5" y="616" font-size="14.67">18</text>
<text x="185.5" y="616" font-size="14.67">25</text>
<text x="219.5" y="616" font-size="14.67">1</text>
<text x="253.5" y="616" font-size="14.67">8</text>
<text x="287.5" y="616" font-size="14.67">15</text>
<text x="321.5" y="616" font-size="14.67">22</text>
<text x="355.5" y="616" font-size="14.67">29</text>
<text x="389.5" y="616" font-size="14.67">6</text>
<text x="423.5" y="616" font-size="14.67">13</text>
<text x="457.5" y="616" font-size="14.67">20</text>
<text x="491.5" y="616" font-size="14.67">27</text>
<text x="525.5" y="616" font-size="14.67">3</text>
<text x="559.5" y="616" font-size="14.67">10</text>
<text x="593.5" y="616" font-size="14.67">17</text>
<text x="627.5" y="616" font-size="14.67">24</text>
<text x="661.5" y="616" font-size="14.67">1</text>
<text x="75.5" y="634.5" font-size="14.67">August</text>
<text x="219.5" y="634.5" font-size="14.67">September</text>
<text x="368" y="634.5" font-size="14.67">October</text>
<text x="525.5" y="634.5" font-size="14.67">November</text>
<text x="661.5" y="634.5" font-size="14.67">Dec</text>
</g>
</svg>
<div class="abs" style="left:4px;top:640px;width:495.5px;height:1px;background:#fdfdf8"></div>
<div class="abs" style="left:4px;top:641px;width:495.5px;height:23px;background:linear-gradient(to bottom,#efede8 0,#f4f3ee 25%,#fbfbf6 55%,#fefefb 75%,#fefefb 100%)"></div>
<div class="abs" style="left:4px;top:664px;width:495.5px;height:1px;background:#e6e4d6"></div>
<div class="sbtn" style="left:4px"><i></i><svg class="abs" style="left:0;top:0" width="23" height="22" viewBox="4 642 23 22"><path d="M16.4 648.6 L12 652.6 L16.4 656.6" stroke="#3f4f73" stroke-width="2.3" fill="none"/></svg></div>
<div class="sbtn" style="left:460px;width:11.3px"><i></i></div>
<div class="sbtn" style="left:476px"><i></i><svg class="abs" style="left:0;top:0" width="23" height="22" viewBox="476 642 23 22"><path d="M485.8 648.6 L490.2 652.6 L485.8 656.6" stroke="#3f4f73" stroke-width="2.3" fill="none"/></svg></div>
<div class="abs" style="left:502px;top:643px;width:1px;height:21px;background:#c9c6b4"></div>
<div class="abs" style="left:503px;top:643px;width:1px;height:21px;background:#f7f6ee"></div>
<div class="abs" style="left:556px;top:643px;width:1px;height:21px;background:#c9c6b4"></div>
<div class="abs" style="left:557px;top:643px;width:1px;height:21px;background:#f7f6ee"></div>
<div class="abs" style="left:658px;top:643px;width:1px;height:21px;background:#c9c6b4"></div>
<div class="abs" style="left:659px;top:643px;width:1px;height:21px;background:#f7f6ee"></div>
<svg class="abs" style="left:500px;top:640px" width="236" height="27" viewBox="500 640 236 27">
<g fill="none" stroke="#000" stroke-width="1.5">
<path d="M517.6 649.3 C514.6 649.3 514.6 652 514.9 654.2 C515 655.6 515.6 656.4 516.4 656.9"/>
<path d="M516.6 656.9 C519.6 656.9 519.6 654 519.3 651.8 C519.2 650.4 518.6 649.6 517.8 649.1"/>
</g>
<path d="M517.2 647.6 l2.6 1.8 l-2.6 1.8z M517 658.6 l-2.6 -1.8 l2.6 -1.8z" fill="#000"/>
<text x="541.9" y="657" font-size="12" font-weight="bold" text-anchor="middle" style="font-family:'Liberation Serif',serif">D</text>
<path d="M572 648 l3.5 3.6 h-2.4 v3 h2.4 l-3.5 3.6 l-3.5 -3.6 h2.4 v-3 h-2.4z" fill="#000"/>
<g shape-rendering="crispEdges"><rect x="596" y="650" width="1" height="7" fill="#000"/><rect x="593" y="653" width="7" height="1" fill="#000"/></g>
<path d="M596.5 648.6 l2.2 2.4 h-4.4z M596.5 658.4 l2.2 -2.4 h-4.4z M591.6 653.5 l2.4 -2.2 v4.4z M601.4 653.5 l-2.4 -2.2 v4.4z" fill="#000"/>
<circle cx="620.4" cy="653.1" r="4" fill="none" stroke="#000" stroke-width="1.3"/><rect x="618" y="652.2" width="5" height="1.9" fill="#000"/>
<circle cx="644.6" cy="653.1" r="4" fill="none" stroke="#000" stroke-width="1.3"/><rect x="642.2" y="652.3" width="5" height="1.7" fill="#000"/><rect x="643.8" y="650.6" width="1.7" height="5" fill="#000"/>
<path d="M676.2 648.6 v9.6 l-5.6 -4.8z" fill="#000"/>
<path d="M695.9 648.6 v9.6 l5.6 -4.8z" fill="#000"/>
<rect x="718.5" y="648.5" width="7" height="8" fill="none" stroke="#000" stroke-width="1"/><rect x="718" y="648" width="8" height="2" fill="#000"/><rect x="720" y="652" width="4" height="1" fill="#777"/><rect x="720" y="654" width="4" height="1" fill="#777"/>
</svg>
</div></body></html>
